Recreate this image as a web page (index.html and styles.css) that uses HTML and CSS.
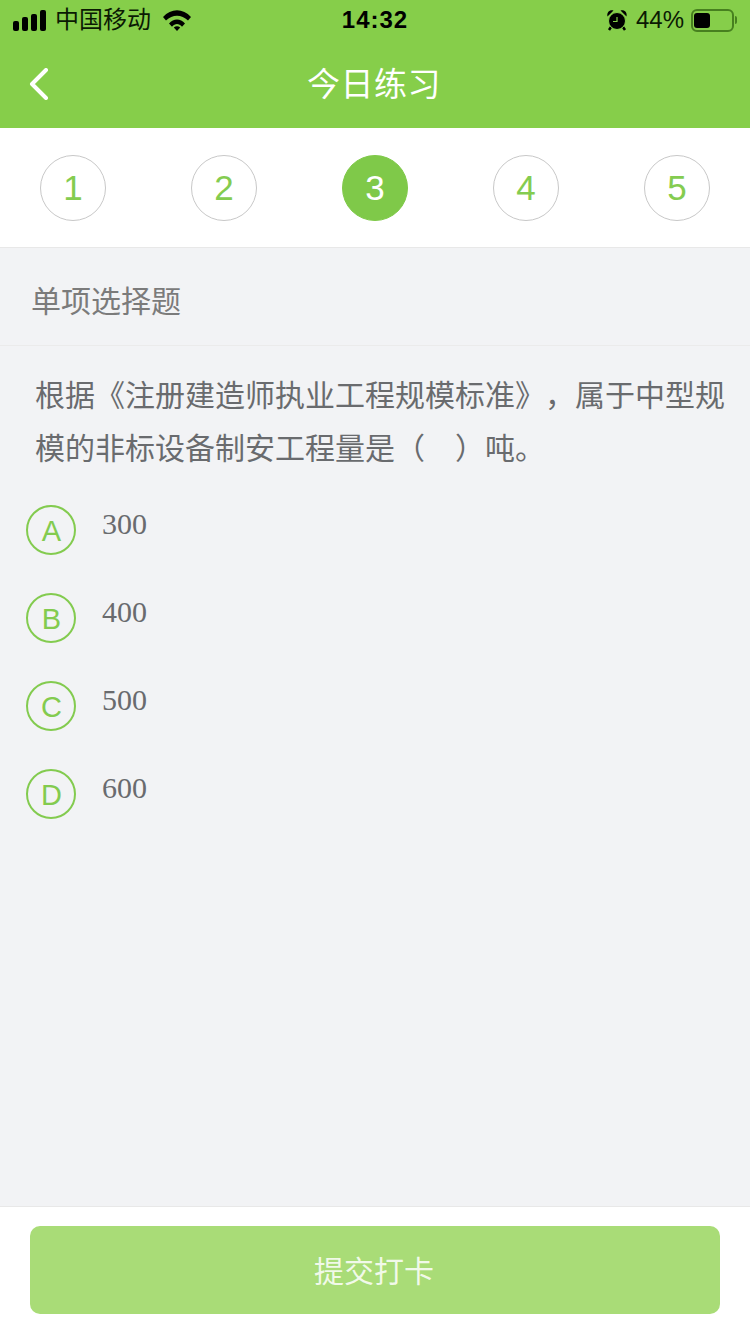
FILE: index.html
```html
<!DOCTYPE html>
<html lang="zh-CN">
<head>
    <meta charset="UTF-8">
    <meta name="viewport" content="width=device-width, initial-scale=1.0">
    <title>今日练习</title>
    <link rel="stylesheet" href="styles.css">
</head>
<body>
    <div class="page">
        <header class="header">
            <div class="status-bar">
                <div class="status-left">
                    <div class="signal">
                        <span class="signal-bar bar-1"></span>
                        <span class="signal-bar bar-2"></span>
                        <span class="signal-bar bar-3"></span>
                        <span class="signal-bar bar-4"></span>
                    </div>
                    <span class="carrier">中国移动</span>
                    <svg class="wifi" width="30" height="22" viewBox="0 0 30 22">
                        <path d="M1 8C9-1 21-1 29 8l-3 3.500C19.500 5 10.500 5 4 11.500z"/>
                        <path d="M7 14.500C11.500 9 18.500 9 23 14.500l-3 3.200C17 14 13 14 10 17.700z"/>
                        <path d="M11.800 18.600c2-1.800 4.400-1.800 6.400 0L15 22z"/>
                    </svg>
                </div>
                <span class="time">14:32</span>
                <div class="status-right">
                    <svg class="alarm" width="22" height="22" viewBox="0 0 22 22">
                        <path d="M1.500 7.500C.5 3.500 3.500 .5 7.500 1.500zM20.500 7.500C21.500 3.500 18.500 .5 14.500 1.500z"/>
                        <path d="M5 18l-2 3M17 18l2 3" class="alarm-leg"/>
                        <circle cx="11" cy="12" r="8.500" class="alarm-face"/>
                        <path d="M11 8V12.500H7" class="alarm-hand"/>
                    </svg>
                    <span class="battery-text">44%</span>
                    <div class="battery">
                        <div class="battery-level"></div>
                    </div>
                    <span class="battery-cap"></span>
                </div>
            </div>
            <div class="nav-bar">
                <svg class="back" width="20" height="32" viewBox="0 0 20 32">
                    <path d="M17 2L3 16l14 14"/>
                </svg>
                <h1 class="nav-title">今日练习</h1>
            </div>
        </header>

        <nav class="steps">
            <span class="step">1</span>
            <span class="step">2</span>
            <span class="step active">3</span>
            <span class="step">4</span>
            <span class="step">5</span>
        </nav>

        <main class="content">
            <div class="question-type">单项选择题</div>
            <p class="question">根据《注册建造师执业工程规模标准》，属于中型规模的非标设备制安工程量是（　）吨。</p>
            <ul class="options">
                <li class="option"><span class="option-key">A</span><span class="option-text">300</span></li>
                <li class="option"><span class="option-key">B</span><span class="option-text">400</span></li>
                <li class="option"><span class="option-key">C</span><span class="option-text">500</span></li>
                <li class="option"><span class="option-key">D</span><span class="option-text">600</span></li>
            </ul>
        </main>

        <footer class="footer">
            <button class="submit" type="button">提交打卡</button>
        </footer>
    </div>
</body>
</html>
```

FILE: styles.css
```css
* {
    box-sizing: border-box;
}
html, body {
    margin: 0;
    padding: 0;
}
body {
    font-family: "Liberation Sans", "Noto Sans CJK SC", sans-serif;
    background: #f2f3f5;
}
.page {
    width: 750px;
    height: 1334px;
    display: flex;
    flex-direction: column;
    overflow: hidden;
}
.header {
    height: 128px;
    background: #86ce4a;
}
.status-bar {
    height: 40px;
    padding: 0 13px;
    display: grid;
    grid-template-columns: 1fr auto 1fr;
    align-items: center;
    color: #0b1a03;
}
.status-left {
    display: flex;
    align-items: center;
}
.signal {
    display: flex;
    align-items: flex-end;
    gap: 3px;
    height: 21px;
    margin-right: 9px;
}
.signal-bar {
    background: #000;
    border-radius: 2px;
}
.bar-1 { width: 6px; height: 10px; }
.bar-2 { width: 6px; height: 14px; }
.bar-3 { width: 6px; height: 17px; }
.bar-4 { width: 6px; height: 21px; }
.carrier {
    font-size: 24px;
    line-height: 30px;
}
.wifi {
    margin-left: 11px;
    fill: #000;
}
.time {
    font-size: 24px;
    font-weight: 700;
    letter-spacing: 1px;
    color: #000;
}
.status-right {
    display: flex;
    align-items: center;
    justify-content: flex-end;
}
.alarm {
    fill: #000;
    margin-right: 8px;
}
.alarm-leg {
    stroke: #000;
    stroke-width: 2.500;
}
.alarm-face {
    stroke: #86ce4a;
    stroke-width: 1;
}
.alarm-hand {
    fill: none;
    stroke: #86ce4a;
    stroke-width: 1.200;
}
.battery-text {
    font-size: 24px;
    margin-right: 7px;
}
.battery {
    width: 43px;
    height: 23px;
    border: 2px solid #47801f;
    border-radius: 6px;
    padding: 2px 1px;
}
.battery-level {
    width: 16px;
    height: 15px;
    background: #000;
    border-radius: 3px;
}
.battery-cap {
    width: 2px;
    height: 8px;
    margin-left: 1px;
    background: #47801f;
    border-radius: 0 2px 2px 0;
}
.nav-bar {
    height: 88px;
    padding: 0 2px 4px 0;
    display: flex;
    align-items: center;
    justify-content: center;
    position: relative;
}
.back {
    position: absolute;
    left: 29px;
    top: 28px;
    fill: none;
    stroke: #fff;
    stroke-width: 4;
    stroke-linecap: round;
    stroke-linejoin: round;
}
.nav-title {
    margin: 0;
    font-size: 33px;
    font-weight: 400;
    color: #fff;
    letter-spacing: 0.5px;
}
.steps {
    height: 120px;
    padding: 0 40px;
    background: #fff;
    border-bottom: 1px solid #e8e8e8;
    display: flex;
    align-items: center;
    justify-content: space-between;
}
.step {
    width: 66px;
    height: 66px;
    border: 1px solid #c8c8c8;
    border-radius: 50%;
    display: flex;
    align-items: center;
    justify-content: center;
    font-size: 35px;
    color: #84cc50;
}
.step.active {
    background: #7fc949;
    border-color: #7fc949;
    color: #fff;
}
.content {
    flex: 1;
}
.question-type {
    height: 98px;
    padding: 4px 31px 0;
    display: flex;
    align-items: center;
    font-size: 30px;
    color: #7b7b7b;
    border-bottom: 1px solid #ebebeb;
}
.question {
    margin: 0;
    padding: 23px 25px 0 35px;
    font-size: 30px;
    line-height: 53px;
    color: #696b6e;
    text-spacing-trim: space-all;
}
.options {
    list-style: none;
    margin: 0;
    padding: 30px 0 0 26px;
}
.option {
    height: 50px;
    margin-bottom: 38px;
    display: flex;
    align-items: flex-start;
}
.option-key {
    width: 50px;
    height: 50px;
    padding: 2px 0 0 1px;
    border: 2px solid #83cb4f;
    border-radius: 50%;
    display: flex;
    align-items: center;
    justify-content: center;
    font-size: 29px;
    color: #83cb4f;
}
.option-text {
    margin-left: 26px;
    font-family: "Liberation Serif", serif;
    font-size: 30px;
    line-height: 38px;
    color: #696b6e;
}
.footer {
    height: 128px;
    padding: 19px 30px 0;
    background: #fff;
    border-top: 1px solid #e8e8e8;
}
.submit {
    display: block;
    width: 690px;
    height: 88px;
    padding: 0 2px 2px 0;
    border: none;
    border-radius: 10px;
    background: #a9dc77;
    color: rgba(255, 255, 255, 0.85);
    font-family: inherit;
    font-size: 30px;
}
```
